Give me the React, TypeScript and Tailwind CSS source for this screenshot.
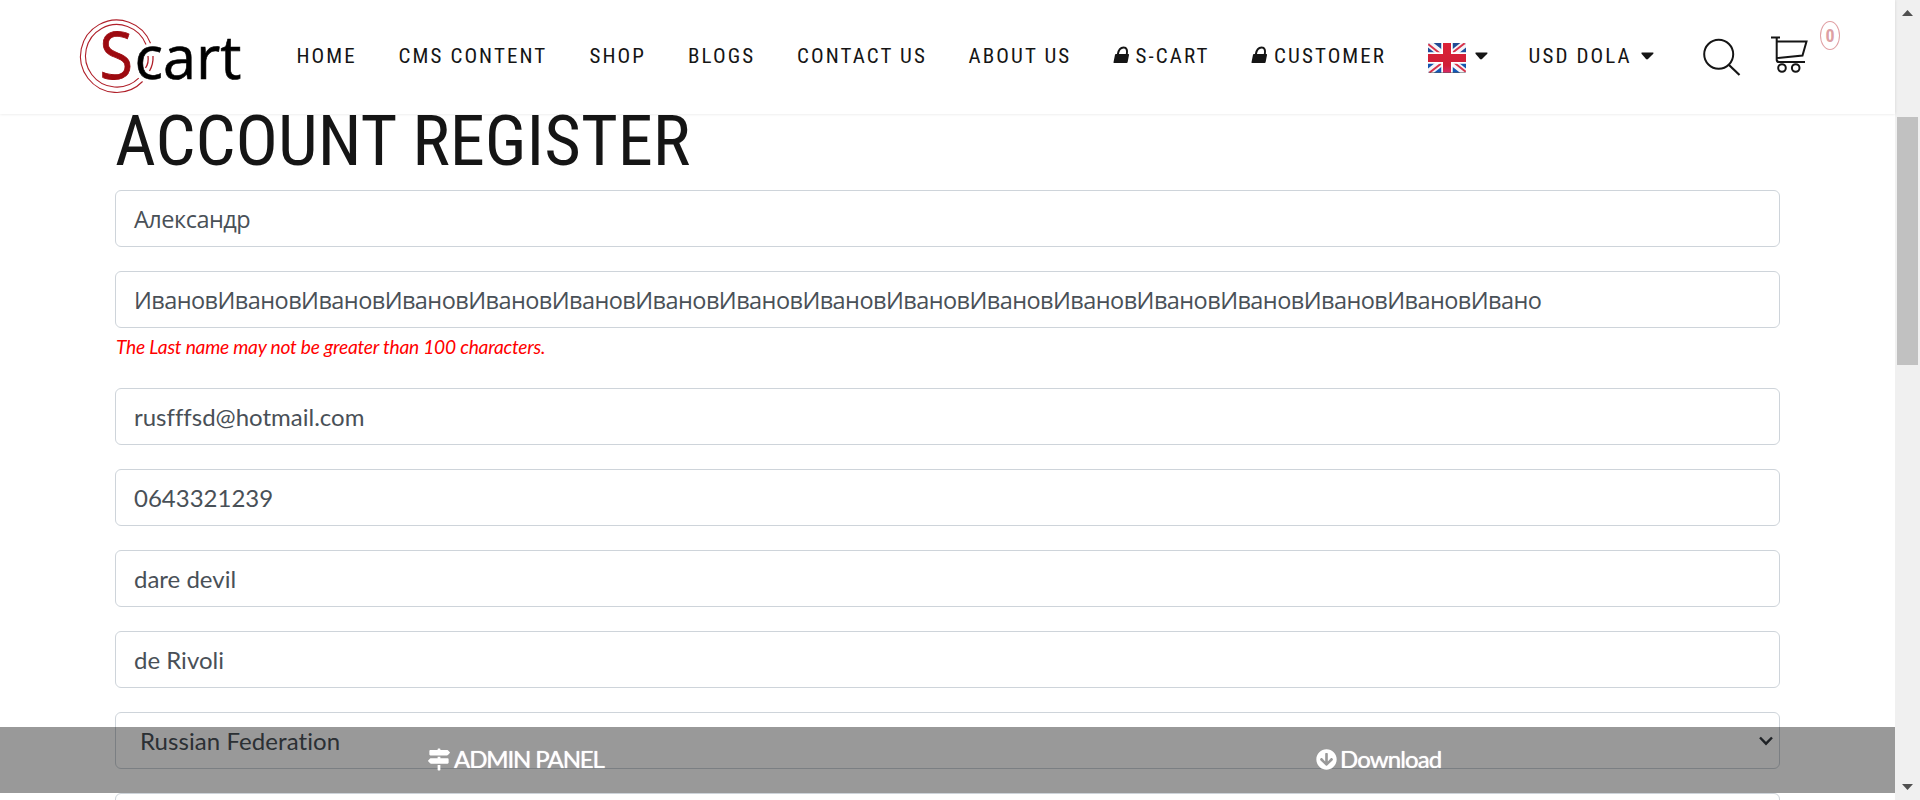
import React from "react";
import { FaMapSigns, FaArrowCircleDown } from "react-icons/fa";

const condensed = "font-['Roboto_Condensed','Roboto',sans-serif] [font-stretch:75%]";

function Logo() {
  return (
    <svg className="block h-[80px] w-[170px] overflow-visible tracking-normal [font-stretch:100%]" viewBox="0 0 170 80" fill="none">
      <g stroke="#b0202a" strokeWidth="1.1">
        <path d="M70.500 25.300A36.200 36.200 0 1 0 62.600 63.500" />
        <path d="M66 26.500A31.300 31.300 0 1 0 58.700 60.200" />
      </g>
      <text x="19.500" y="61" fontSize="66" fill="#9d0a10" stroke="#9d0a10" strokeWidth=".8" fontFamily="'Open Sans', sans-serif" textLength="33.500" lengthAdjust="spacingAndGlyphs">S</text>
      <text x="54.500" y="61" fontSize="61" fill="#000" stroke="#000" strokeWidth=".6" fontFamily="'Open Sans', sans-serif" textLength="107" lengthAdjust="spacingAndGlyphs">cart</text>
      <g stroke="#b0202a" strokeWidth="1.300">
        <path d="M68 38q1 7-2.500 12M73 38q.5 8-3.500 15" />
      </g>
    </svg>
  );
}

function Lock() {
  return (
    <svg className="block h-[18px] w-[17px]" viewBox="0 0 17 18">
      <path d="M4.800 8.500C5.500 4 7.500 1.600 10.600 1.600S14.600 4 13.800 8.500" fill="none" stroke="#151515" strokeWidth="2" />
      <path d="M2.800 8H15.400Q16.200 8 16 9L14.600 16.200Q14.400 17 13.600 17H1Q.3 17 .5 16.200L2 8.800Q2.200 8 2.800 8z" fill="#151515" />
    </svg>
  );
}

function Caret() {
  return (
    <svg className="block h-[8px] w-[13px]" viewBox="0 0 13 8">
      <path d="M1 0.500H12Q12.900.600 12.300 1.800L7 7Q6 7.800 5 7L.500 1.800Q0 .600 1 .500z" fill="#151515" />
    </svg>
  );
}

function Flag() {
  return (
    <svg className="block h-[30px] w-[38px] rounded-[2px]" viewBox="0 0 38 30">
      <defs>
        <linearGradient id="blue" x2="0" y2="1"><stop stopColor="#234a92" /><stop offset="1" stopColor="#1259b8" /></linearGradient>
        <linearGradient id="red" x2="0" y2="1"><stop stopColor="#dc2136" /><stop offset=".75" stopColor="#cf1f38" /><stop offset="1" stopColor="#d92a6a" /></linearGradient>
      </defs>
      <path d="M0 0H38V30H0z" fill="url(#blue)" />
      <path d="M0 0 38 30M38 0 0 30" stroke="#f4f4f8" strokeWidth="7" />
      <path d="M0 1 19 16M38 29 19 14M37 0 19 14M1 30 19 16" stroke="#d8324a" strokeWidth="2" />
      <path d="M19 0V30M0 15H38" stroke="#fff" strokeWidth="11.500" />
      <path d="M15 0H23V11H38V19H23V30H15V19H0V11H15z" fill="url(#red)" />
      <path d="M0 29.500H38" stroke="#555" strokeOpacity=".5" />
    </svg>
  );
}

function Field({ value, className = "leading-[36px]" }: { value: string; className?: string }) {
  return (
    <div className={`flex h-[57px] shrink-0 items-center rounded-[6px] border border-[#ced4da] bg-white px-[18px] whitespace-nowrap text-[#495057] ${className}`}>
      {value}
    </div>
  );
}

export default function App() {
  return (
    <div className="relative flex h-[800px] w-[1920px] overflow-hidden bg-white font-['Lato',sans-serif] text-[24px] [font-variant-ligatures:none]">
      <main className="flex w-[1895px] flex-col">
        <header className={`z-10 flex h-[114px] shrink-0 bg-white pl-[80px] text-[21px] leading-[30px] tracking-[2.100px] whitespace-nowrap text-[#151515] shadow-[0_0_3px_rgba(0,0,0,0.12)] ${condensed}`}>
          <div className="w-[216.500px] shrink-0 pt-[18px]"><Logo /></div>
          <nav className="flex shrink-0 pt-[41px]">
            <a className="w-[102px]">HOME</a>
            <a className="w-[191px]">CMS CONTENT</a>
            <a className="w-[98.500px]">SHOP</a>
            <a className="w-[109px]">BLOGS</a>
            <a className="w-[171.500px]">CONTACT US</a>
            <a className="w-[144px]">ABOUT US</a>
            <a className="flex w-[138.500px] gap-[6px]"><span className="pt-[5px]"><Lock /></span>S-CART</a>
            <a className="flex w-[177px] gap-[6px]"><span className="pt-[5px]"><Lock /></span>CUSTOMER</a>
            <a className="flex w-[100.500px] gap-[9px]"><span className="pt-[2px]"><Flag /></span><span className="pt-[11px]"><Caret /></span></a>
            <a className="flex w-[174.500px]"><span className="w-[112px]">USD DOLA</span><span className="pt-[11px]"><Caret /></span></a>
          </nav>
          <svg className="mt-[38px] h-[39px] w-[39px] shrink-0" viewBox="0 0 39 39" fill="none" stroke="#151515" strokeWidth="2">
            <circle cx="15.700" cy="16.300" r="14.500" />
            <path d="M26 27 36.500 37" strokeWidth="2.200" />
          </svg>
          <svg className="mt-[35px] ml-[29px] h-[39px] w-[38px] shrink-0" viewBox="0 0 38 39" fill="none" stroke="#151515" strokeWidth="2">
            <path d="M0 2.500H9M5.700 2.500V25Q6 27 8 27H34M6 6.500H35.500L31.500 20.500 6 23" />
            <circle cx="11" cy="33" r="3.800" /><circle cx="24.700" cy="33" r="3.800" />
          </svg>
          <div className="mt-[21px] ml-[11px] flex h-[29px] w-[20px] shrink-0 items-center justify-center rounded-[50%] border border-[#e0a0a4] text-[18px] font-bold tracking-normal text-[#dda0a4]">0</div>
        </header>
        <section className="flex flex-col pr-[115px] pl-[115px]">
          <h1 className={`h-[76px] pt-[2px] text-[70.700px] leading-[50px] whitespace-nowrap text-[#151515] ${condensed}`}>ACCOUNT REGISTER</h1>
          <Field value="Александр" className="pt-[2px] font-['Open_Sans',sans-serif] text-[23.500px] tracking-[-0.500px]" />
          <Field value="ИвановИвановИвановИвановИвановИвановИвановИвановИвановИвановИвановИвановИвановИвановИвановИвановИвано" className="mt-6 pt-[2px] font-['Open_Sans',sans-serif] text-[23.500px] tracking-[-0.560px]" />
          <p className="h-[60px] shrink-0 pt-[5px] pl-[1px] text-[19.200px] leading-[28px] tracking-[-0.230px] text-[#ff0000] italic">The Last name may not be greater than 100 characters.</p>
          <div className="flex flex-col gap-6">
            <Field value="rusfffsd@hotmail.com" />
            <Field value="0643321239" />
            <Field value="dare devil" />
            <Field value="de Rivoli" />
            <div className="flex h-[57px] shrink-0 items-center justify-between rounded-[6px] border border-[#ced4da] pr-[6px] pl-[24px] tracking-[0.070px] text-[#495057]">
              Russian Federation
              <svg className="h-[10px] w-[14px]" viewBox="0 0 14 10" fill="none" stroke="#343a40" strokeWidth="2.400"><path d="M1 1.500 7 7.700 13 1.500" /></svg>
            </div>
            <Field value="" />
          </div>
        </section>
      </main>
      <footer className="absolute top-[727px] left-0 flex h-[66px] w-[1895px] bg-black/40 pb-[2px] text-white [text-shadow:0_0_1px_#fff]">
        <a className="flex w-[887.500px] items-center gap-[4px] pl-[428px] tracking-[-1.100px]"><FaMapSigns className="h-[23px] w-[22px]" />ADMIN PANEL</a>
        <a className="flex items-center gap-[3px] pl-[428.500px] tracking-[-0.900px]"><FaArrowCircleDown className="h-[21px] w-[21px]" />Download</a>
      </footer>
      <aside className="flex w-[25px] flex-col items-center bg-[#f0f0f0]">
        <svg className="mt-[10px] h-[6px] w-[11px]" viewBox="0 0 11 6"><path d="M5.500 0 11 6H0z" fill="#505050" /></svg>
        <div className="mt-[101px] h-[248px] w-[21px] bg-[#c1c1c1]" />
        <svg className="mt-[419px] h-[6px] w-[11px]" viewBox="0 0 11 6"><path d="M0 0H11L5.500 6z" fill="#505050" /></svg>
      </aside>
    </div>
  );
}
